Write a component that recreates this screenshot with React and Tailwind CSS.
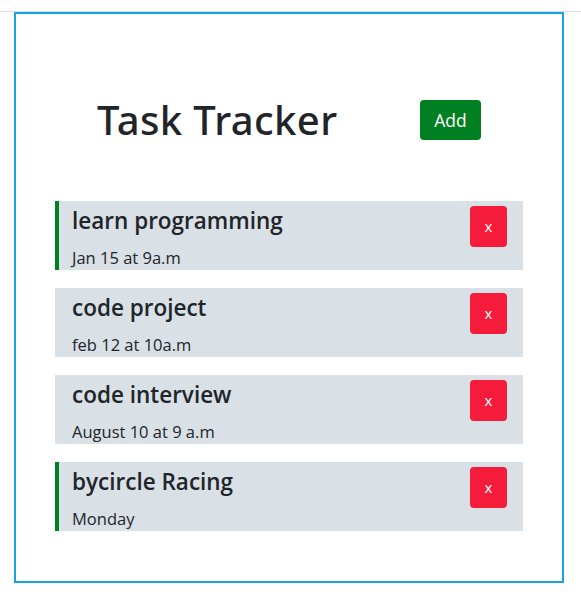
import React, { useState } from 'react';

const initialTasks = [
  { id: 1, text: 'learn programming', day: 'Jan 15 at 9a.m', reminder: true },
  { id: 2, text: 'code project', day: 'feb 12 at 10a.m', reminder: false },
  { id: 3, text: 'code interview', day: 'August 10 at 9 a.m', reminder: false },
  { id: 4, text: 'bycircle Racing', day: 'Monday', reminder: true },
];

const Task = ({ task, onDelete }) => (
  <div
    className={`flex justify-between h-[69px] bg-[#d9e0e6] pl-[13px] pr-[16px] ${
      task.reminder ? 'border-l-4 border-[#008020]' : 'pl-[17px]'
    }`}
  >
    <div className="flex flex-col">
      <h3 className="text-[22.5px] font-semibold leading-[28px] mt-[6px] text-[#212529]">{task.text}</h3>
      <p className="text-[16.5px] leading-[20px] mt-[13px] text-[#212529]">{task.day}</p>
    </div>
    <button
      onClick={() => onDelete(task.id)}
      className="mt-[5px] w-[37px] h-[41px] rounded-[4px] bg-[#f51b3a] text-white text-[15px] leading-none"
    >
      x
    </button>
  </div>
);

const App = () => {
  const [tasks, setTasks] = useState(initialTasks);

  const deleteTask = (id) => setTasks(tasks.filter((t) => t.id !== id));

  return (
    <div className="min-h-screen bg-white" style={{ fontFamily: '"Open Sans", "Noto Sans", sans-serif' }}>
      <div className="border-t border-[#dcdcdc] mt-[11px]">
        <div className="ml-[14px] w-[550px] h-[571px] border-2 border-[#18a3e6] px-[39px]">
          <header className="flex justify-between items-center px-[42px] pt-[84px] pb-[59px]">
            <h1 className="font-['Noto_Sans',sans-serif] text-[40px] leading-[44px] text-[#212529] font-medium tracking-[0.4px]">Task Tracker</h1>
            <button className="w-[61px] h-[40px] rounded-[4px] bg-[#008020] text-white text-[17.5px]">Add</button>
          </header>
          <div className="flex flex-col gap-[18px]">
            {tasks.map((task) => (
              <Task key={task.id} task={task} onDelete={deleteTask} />
            ))}
          </div>
        </div>
      </div>
    </div>
  );
};

export default App;
